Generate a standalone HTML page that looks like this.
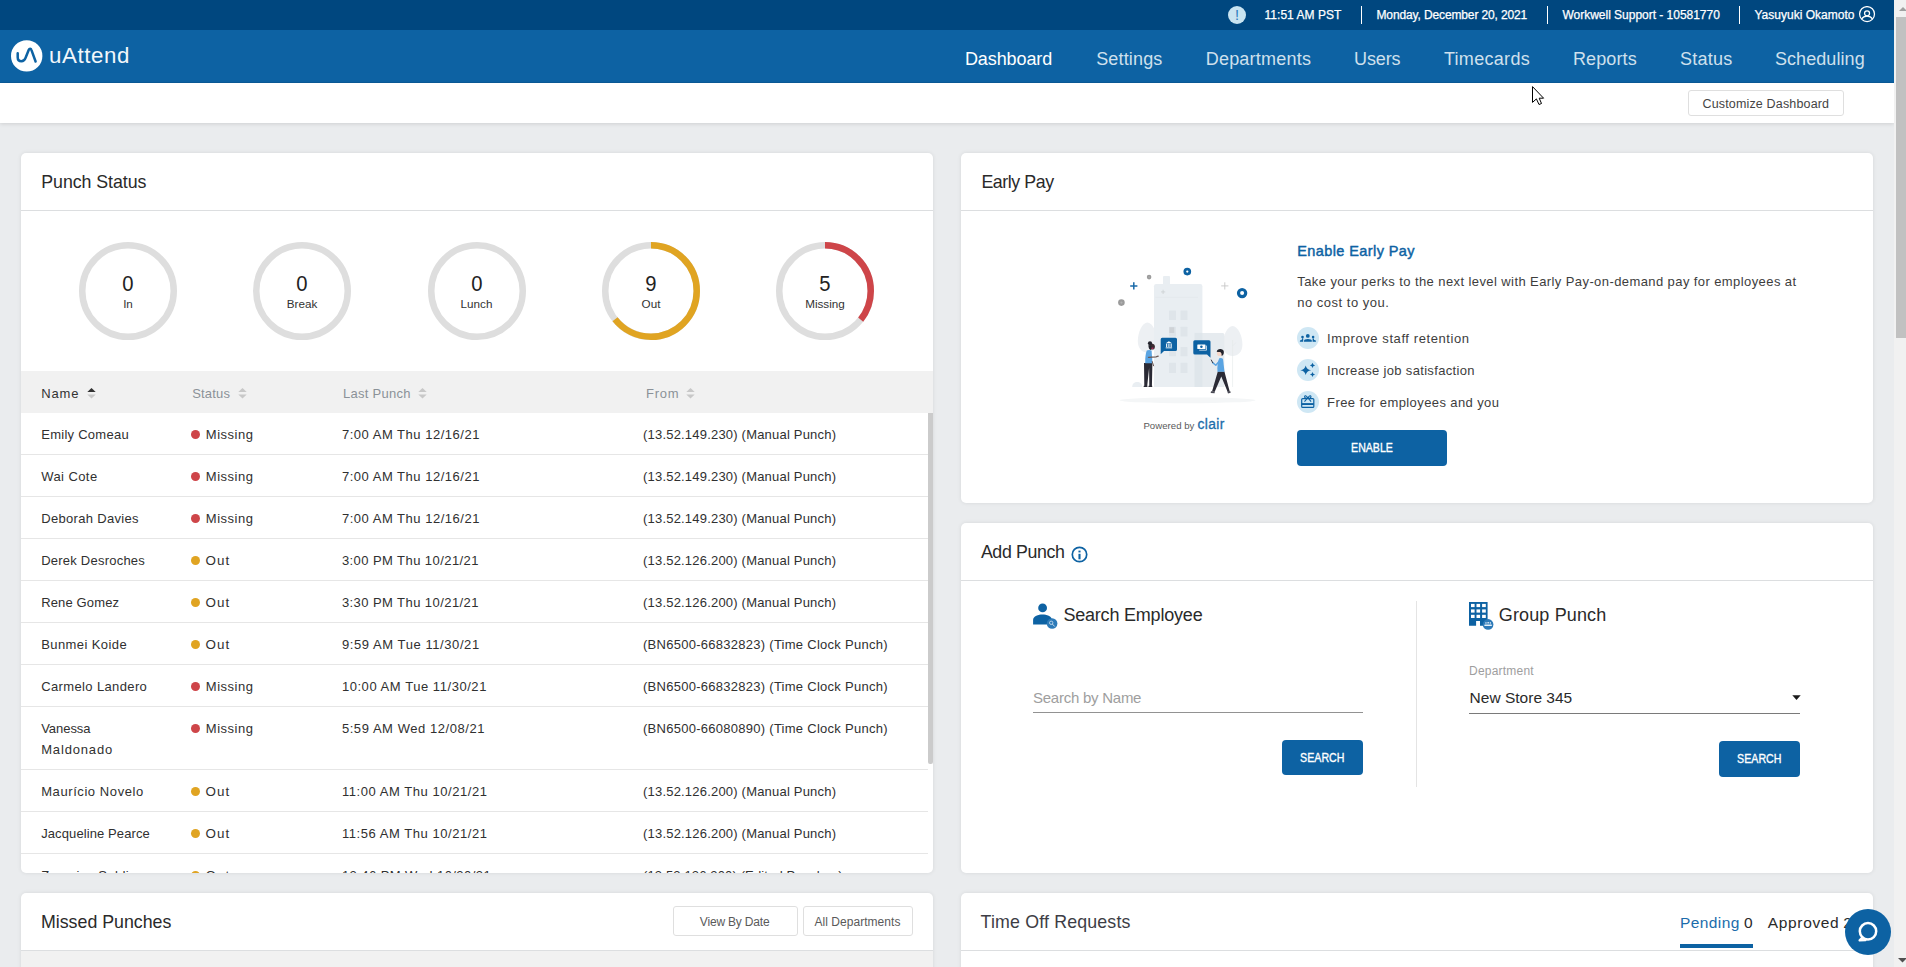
<!DOCTYPE html>
<html lang="en"><head><meta charset="utf-8"><title>uAttend Dashboard</title>
<style>
*{box-sizing:border-box;margin:0;padding:0}
html,body{width:1906px;height:967px;overflow:hidden}
body{font-family:"Liberation Sans",sans-serif;background:#eaecee;color:#333;position:relative}
.abs{position:absolute}
.card{position:absolute;background:#fff;border-radius:5px;box-shadow:0 0 4px rgba(0,0,0,.09);overflow:hidden}
.hline{position:absolute;left:0;right:0;height:1px;background:#dcdee0}
.btn{position:absolute;border:1px solid #dfdfdf;border-radius:3px;background:#fff}
.bbtn{position:absolute;background:#0d62a3;border-radius:4px}
.row{position:absolute;left:0;width:907px;height:1px;background:#e6e6e6}
.dot{position:absolute;width:9px;height:9px;border-radius:50%}
</style></head><body>

<div class="abs" style="left:0;top:0;width:1894px;height:30px;background:#00477f"></div>
<div class="abs" style="left:0;top:30px;width:1894px;height:53px;background:#0d62a3;border-bottom:1px solid #0b5b99"></div>
<div class="abs" style="left:0;top:83px;width:1894px;height:40px;background:#fff;box-shadow:0 1px 4px rgba(0,0,0,.12)"></div>
<div class="abs" style="left:1228px;top:6px;width:18px;height:18px;border-radius:50%;background:#c9e4f1"></div>
<span class="abs" style="left:1228px;top:6px;width:18px;height:18px;line-height:18px;text-align:center;font-size:14.5px;color:#2b7bbd">!</span>
<span style="position:absolute;left:1264.5px;top:9px;font-size:12px;line-height:1;color:#fff;white-space:pre;-webkit-text-stroke:0.25px #fff;letter-spacing:0.04px;">11:51 AM PST</span>
<span style="position:absolute;left:1376.5px;top:9px;font-size:12px;line-height:1;color:#fff;white-space:pre;-webkit-text-stroke:0.25px #fff;letter-spacing:-0.13px;">Monday, December 20, 2021</span>
<span style="position:absolute;left:1562.5px;top:9px;font-size:12px;line-height:1;color:#fff;white-space:pre;-webkit-text-stroke:0.25px #fff;letter-spacing:-0.02px;">Workwell Support - 10581770</span>
<span style="position:absolute;left:1754.5px;top:9px;font-size:12px;line-height:1;color:#fff;white-space:pre;-webkit-text-stroke:0.25px #fff;letter-spacing:0.01px;">Yasuyuki Okamoto</span>
<div class="abs" style="left:1361px;top:6px;width:1px;height:18px;background:#fff"></div>
<div class="abs" style="left:1547px;top:6px;width:1px;height:18px;background:#fff"></div>
<div class="abs" style="left:1739px;top:6px;width:1px;height:18px;background:#fff"></div>
<svg class="abs" style="left:1858px;top:6px" width="18" height="18" viewBox="0 0 18 18"><circle cx="9.05" cy="8.05" r="7.45" fill="none" stroke="#fff" stroke-width="1.25"/><circle cx="9.05" cy="7.3" r="2.5" fill="none" stroke="#fff" stroke-width="1.25"/><path d="M3.7 13 C5 10.700 7 10.100 9.05 10.100 C11.100 10.100 13.100 10.700 14.400 13" fill="none" stroke="#fff" stroke-width="1.25"/></svg>
<svg class="abs" style="left:10px;top:40px" width="34" height="34" viewBox="0 0 34 34"><circle cx="16.7" cy="15.9" r="15.7" fill="#fff"/><path d="M7.7 13.2 V17.2 C7.7 20 9.200 21.200 11.400 21.200 C13.700 21.200 14.900 19.800 15.800 17.300 L18.800 9.800 C19.400 8.300 20.900 8.300 21.400 9.800 L25.600 21.500" fill="none" stroke="#0d62a3" stroke-width="2.5" stroke-linecap="round" stroke-linejoin="round"/></svg>
<span style="position:absolute;left:49.1px;top:45px;font-size:22.3px;line-height:1;color:#f2f7fb;white-space:pre;letter-spacing:0.57px;">uAttend</span>
<span style="position:absolute;left:964.9px;top:50px;font-size:18px;line-height:1;color:#fff;white-space:pre;letter-spacing:-0.09px;">Dashboard</span>
<span style="position:absolute;left:1096.2px;top:50px;font-size:18px;line-height:1;color:#cfe0ed;white-space:pre;letter-spacing:0.16px;">Settings</span>
<span style="position:absolute;left:1205.7px;top:50px;font-size:18px;line-height:1;color:#cfe0ed;white-space:pre;letter-spacing:0.22px;">Departments</span>
<span style="position:absolute;left:1354.1px;top:50px;font-size:18px;line-height:1;color:#cfe0ed;white-space:pre;letter-spacing:-0.12px;">Users</span>
<span style="position:absolute;left:1443.9px;top:50px;font-size:18px;line-height:1;color:#cfe0ed;white-space:pre;letter-spacing:0.31px;">Timecards</span>
<span style="position:absolute;left:1572.9px;top:50px;font-size:18px;line-height:1;color:#cfe0ed;white-space:pre;letter-spacing:0.13px;">Reports</span>
<span style="position:absolute;left:1679.9px;top:50px;font-size:18px;line-height:1;color:#cfe0ed;white-space:pre;letter-spacing:0.26px;">Status</span>
<span style="position:absolute;left:1774.9px;top:50px;font-size:18px;line-height:1;color:#cfe0ed;white-space:pre;letter-spacing:0.08px;">Scheduling</span>
<div class="btn" style="left:1688px;top:90px;width:156px;height:26px"></div>
<span style="position:absolute;left:1702.5px;top:98px;font-size:12.5px;line-height:1;color:#444;white-space:pre;letter-spacing:0.16px;">Customize Dashboard</span>
<svg class="abs" style="left:1531px;top:85px" width="14" height="21" viewBox="0 0 14 21"><path d="M1.5 1.6 V17.4 L5.4 13.9 L8 19.5 L10.5 18.5 L8.2 13.2 H12.6 Z" fill="#fff" stroke="#000" stroke-width="1"/></svg>
<div class="card" style="left:21px;top:153px;width:912px;height:720px">
<span style="position:absolute;left:20.3px;top:21px;font-size:17.8px;line-height:1;color:#2a2a2a;white-space:pre;letter-spacing:-0.06px;">Punch Status</span>
<div class="hline" style="top:57px"></div>
<svg class="abs" style="left:57px;top:88px" width="100" height="100" viewBox="0 0 100 100"><circle cx="50" cy="50" r="45.75" fill="none" stroke="#dedede" stroke-width="6.5"/></svg>
<div class="abs" style="left:57px;top:119px;width:100px;text-align:center;font-size:21.5px;line-height:24px;color:#222;transform:scaleX(.94)">0</div>
<div class="abs" style="left:57px;top:143px;width:100px;text-align:center;font-size:11.7px;line-height:16px;color:#333;letter-spacing:0">In</div>
<svg class="abs" style="left:231px;top:88px" width="100" height="100" viewBox="0 0 100 100"><circle cx="50" cy="50" r="45.75" fill="none" stroke="#dedede" stroke-width="6.5"/></svg>
<div class="abs" style="left:231px;top:119px;width:100px;text-align:center;font-size:21.5px;line-height:24px;color:#222;transform:scaleX(.94)">0</div>
<div class="abs" style="left:231px;top:143px;width:100px;text-align:center;font-size:11.7px;line-height:16px;color:#333;letter-spacing:0">Break</div>
<svg class="abs" style="left:405.5px;top:88px" width="100" height="100" viewBox="0 0 100 100"><circle cx="50" cy="50" r="45.75" fill="none" stroke="#dedede" stroke-width="6.5"/></svg>
<div class="abs" style="left:405.5px;top:119px;width:100px;text-align:center;font-size:21.5px;line-height:24px;color:#222;transform:scaleX(.94)">0</div>
<div class="abs" style="left:405.5px;top:143px;width:100px;text-align:center;font-size:11.7px;line-height:16px;color:#333;letter-spacing:0">Lunch</div>
<svg class="abs" style="left:580px;top:88px" width="100" height="100" viewBox="0 0 100 100"><circle cx="50" cy="50" r="45.75" fill="none" stroke="#dedede" stroke-width="6.5"/><circle cx="50" cy="50" r="45.75" fill="none" stroke="#e0a422" stroke-width="6.5" stroke-dasharray="184.79 287.46" transform="rotate(-90 50 50)"/></svg>
<div class="abs" style="left:580px;top:119px;width:100px;text-align:center;font-size:21.5px;line-height:24px;color:#222;transform:scaleX(.94)">9</div>
<div class="abs" style="left:580px;top:143px;width:100px;text-align:center;font-size:11.7px;line-height:16px;color:#333;letter-spacing:0">Out</div>
<svg class="abs" style="left:754px;top:88px" width="100" height="100" viewBox="0 0 100 100"><circle cx="50" cy="50" r="45.75" fill="none" stroke="#dedede" stroke-width="6.5"/><circle cx="50" cy="50" r="45.75" fill="none" stroke="#ce4549" stroke-width="6.5" stroke-dasharray="102.66 287.46" transform="rotate(-90 50 50)"/></svg>
<div class="abs" style="left:754px;top:119px;width:100px;text-align:center;font-size:21.5px;line-height:24px;color:#222;transform:scaleX(.94)">5</div>
<div class="abs" style="left:754px;top:143px;width:100px;text-align:center;font-size:11.7px;line-height:16px;color:#333;letter-spacing:0">Missing</div>
<div class="abs" style="left:0;top:218px;width:912px;height:42px;background:#f1f1f1"></div>
<span style="position:absolute;left:20.2px;top:234px;font-size:13px;line-height:1;color:#333;white-space:pre;letter-spacing:0.88px;">Name</span>
<svg class="abs" style="left:65.5px;top:234px" width="9" height="13" viewBox="0 0 9 13"><path d="M0.3 5 L4.5 1 L8.7 5Z" fill="#333"/><path d="M0.3 7.4 L4.5 11.4 L8.7 7.4Z" fill="#c8c8c8"/></svg>
<span style="position:absolute;left:171.2px;top:234px;font-size:13px;line-height:1;color:#8b9198;white-space:pre;letter-spacing:0.18px;">Status</span>
<svg class="abs" style="left:217px;top:234px" width="9" height="13" viewBox="0 0 9 13"><path d="M0.3 5 L4.5 1 L8.7 5Z" fill="#c8c8c8"/><path d="M0.3 7.4 L4.5 11.4 L8.7 7.4Z" fill="#c8c8c8"/></svg>
<span style="position:absolute;left:322.0px;top:234px;font-size:13px;line-height:1;color:#8b9198;white-space:pre;letter-spacing:0.28px;">Last Punch</span>
<svg class="abs" style="left:397px;top:234px" width="9" height="13" viewBox="0 0 9 13"><path d="M0.3 5 L4.5 1 L8.7 5Z" fill="#c8c8c8"/><path d="M0.3 7.4 L4.5 11.4 L8.7 7.4Z" fill="#c8c8c8"/></svg>
<span style="position:absolute;left:625.0px;top:234px;font-size:13px;line-height:1;color:#8b9198;white-space:pre;letter-spacing:0.73px;">From</span>
<svg class="abs" style="left:665px;top:234px" width="9" height="13" viewBox="0 0 9 13"><path d="M0.3 5 L4.5 1 L8.7 5Z" fill="#c8c8c8"/><path d="M0.3 7.4 L4.5 11.4 L8.7 7.4Z" fill="#c8c8c8"/></svg>
<span style="position:absolute;left:20.2px;top:275px;font-size:13px;line-height:1;color:#303030;white-space:pre;letter-spacing:0.27px;">Emily Comeau</span>
<div class="dot" style="left:170px;top:277px;background:#ce4549"></div>
<span style="position:absolute;left:184.8px;top:275px;font-size:13px;line-height:1;color:#303030;white-space:pre;letter-spacing:0.51px;">Missing</span>
<span style="position:absolute;left:320.9px;top:275px;font-size:13px;line-height:1;color:#303030;white-space:pre;letter-spacing:0.52px;">7:00 AM Thu 12/16/21</span>
<span style="position:absolute;left:622.0px;top:275px;font-size:13px;line-height:1;color:#303030;white-space:pre;letter-spacing:0.20px;">(13.52.149.230) (Manual Punch)</span>
<div class="row" style="top:301px"></div>
<span style="position:absolute;left:20.2px;top:317px;font-size:13px;line-height:1;color:#303030;white-space:pre;letter-spacing:0.42px;">Wai Cote</span>
<div class="dot" style="left:170px;top:319px;background:#ce4549"></div>
<span style="position:absolute;left:184.8px;top:317px;font-size:13px;line-height:1;color:#303030;white-space:pre;letter-spacing:0.51px;">Missing</span>
<span style="position:absolute;left:320.9px;top:317px;font-size:13px;line-height:1;color:#303030;white-space:pre;letter-spacing:0.52px;">7:00 AM Thu 12/16/21</span>
<span style="position:absolute;left:622.0px;top:317px;font-size:13px;line-height:1;color:#303030;white-space:pre;letter-spacing:0.20px;">(13.52.149.230) (Manual Punch)</span>
<div class="row" style="top:343px"></div>
<span style="position:absolute;left:20.2px;top:359px;font-size:13px;line-height:1;color:#303030;white-space:pre;letter-spacing:0.32px;">Deborah Davies</span>
<div class="dot" style="left:170px;top:361px;background:#ce4549"></div>
<span style="position:absolute;left:184.8px;top:359px;font-size:13px;line-height:1;color:#303030;white-space:pre;letter-spacing:0.51px;">Missing</span>
<span style="position:absolute;left:320.9px;top:359px;font-size:13px;line-height:1;color:#303030;white-space:pre;letter-spacing:0.52px;">7:00 AM Thu 12/16/21</span>
<span style="position:absolute;left:622.0px;top:359px;font-size:13px;line-height:1;color:#303030;white-space:pre;letter-spacing:0.20px;">(13.52.149.230) (Manual Punch)</span>
<div class="row" style="top:385px"></div>
<span style="position:absolute;left:20.2px;top:401px;font-size:13px;line-height:1;color:#303030;white-space:pre;letter-spacing:0.23px;">Derek Desroches</span>
<div class="dot" style="left:170px;top:403px;background:#e0a422"></div>
<span style="position:absolute;left:184.4px;top:401px;font-size:13.4px;line-height:1;color:#303030;white-space:pre;letter-spacing:1.09px;">Out</span>
<span style="position:absolute;left:320.9px;top:401px;font-size:13px;line-height:1;color:#303030;white-space:pre;letter-spacing:0.43px;">3:00 PM Thu 10/21/21</span>
<span style="position:absolute;left:622.0px;top:401px;font-size:13px;line-height:1;color:#303030;white-space:pre;letter-spacing:0.20px;">(13.52.126.200) (Manual Punch)</span>
<div class="row" style="top:427px"></div>
<span style="position:absolute;left:20.2px;top:443px;font-size:13px;line-height:1;color:#303030;white-space:pre;letter-spacing:0.14px;">Rene Gomez</span>
<div class="dot" style="left:170px;top:445px;background:#e0a422"></div>
<span style="position:absolute;left:184.4px;top:443px;font-size:13.4px;line-height:1;color:#303030;white-space:pre;letter-spacing:1.09px;">Out</span>
<span style="position:absolute;left:320.9px;top:443px;font-size:13px;line-height:1;color:#303030;white-space:pre;letter-spacing:0.43px;">3:30 PM Thu 10/21/21</span>
<span style="position:absolute;left:622.0px;top:443px;font-size:13px;line-height:1;color:#303030;white-space:pre;letter-spacing:0.20px;">(13.52.126.200) (Manual Punch)</span>
<div class="row" style="top:469px"></div>
<span style="position:absolute;left:20.2px;top:485px;font-size:13px;line-height:1;color:#303030;white-space:pre;letter-spacing:0.41px;">Bunmei Koide</span>
<div class="dot" style="left:170px;top:487px;background:#e0a422"></div>
<span style="position:absolute;left:184.4px;top:485px;font-size:13.4px;line-height:1;color:#303030;white-space:pre;letter-spacing:1.09px;">Out</span>
<span style="position:absolute;left:320.9px;top:485px;font-size:13px;line-height:1;color:#303030;white-space:pre;letter-spacing:0.58px;">9:59 AM Tue 11/30/21</span>
<span style="position:absolute;left:622.0px;top:485px;font-size:13px;line-height:1;color:#303030;white-space:pre;letter-spacing:0.27px;">(BN6500-66832823) (Time Clock Punch)</span>
<div class="row" style="top:511px"></div>
<span style="position:absolute;left:20.2px;top:527px;font-size:13px;line-height:1;color:#303030;white-space:pre;letter-spacing:0.37px;">Carmelo Landero</span>
<div class="dot" style="left:170px;top:529px;background:#ce4549"></div>
<span style="position:absolute;left:184.8px;top:527px;font-size:13px;line-height:1;color:#303030;white-space:pre;letter-spacing:0.51px;">Missing</span>
<span style="position:absolute;left:320.9px;top:527px;font-size:13px;line-height:1;color:#303030;white-space:pre;letter-spacing:0.55px;">10:00 AM Tue 11/30/21</span>
<span style="position:absolute;left:622.0px;top:527px;font-size:13px;line-height:1;color:#303030;white-space:pre;letter-spacing:0.27px;">(BN6500-66832823) (Time Clock Punch)</span>
<div class="row" style="top:553px"></div>
<span style="position:absolute;left:20.2px;top:569px;font-size:13px;line-height:1;color:#303030;white-space:pre;letter-spacing:-0.05px;">Vanessa</span>
<span style="position:absolute;left:20.2px;top:590px;font-size:13px;line-height:1;color:#303030;white-space:pre;letter-spacing:0.84px;">Maldonado</span>
<div class="dot" style="left:170px;top:571px;background:#ce4549"></div>
<span style="position:absolute;left:184.8px;top:569px;font-size:13px;line-height:1;color:#303030;white-space:pre;letter-spacing:0.51px;">Missing</span>
<span style="position:absolute;left:320.9px;top:569px;font-size:13px;line-height:1;color:#303030;white-space:pre;letter-spacing:0.56px;">5:59 AM Wed 12/08/21</span>
<span style="position:absolute;left:622.0px;top:569px;font-size:13px;line-height:1;color:#303030;white-space:pre;letter-spacing:0.27px;">(BN6500-66080890) (Time Clock Punch)</span>
<div class="row" style="top:616px"></div>
<span style="position:absolute;left:20.2px;top:632px;font-size:13px;line-height:1;color:#303030;white-space:pre;letter-spacing:0.58px;">Maurício Novelo</span>
<div class="dot" style="left:170px;top:634px;background:#e0a422"></div>
<span style="position:absolute;left:184.4px;top:632px;font-size:13.4px;line-height:1;color:#303030;white-space:pre;letter-spacing:1.09px;">Out</span>
<span style="position:absolute;left:320.9px;top:632px;font-size:13px;line-height:1;color:#303030;white-space:pre;letter-spacing:0.56px;">11:00 AM Thu 10/21/21</span>
<span style="position:absolute;left:622.0px;top:632px;font-size:13px;line-height:1;color:#303030;white-space:pre;letter-spacing:0.20px;">(13.52.126.200) (Manual Punch)</span>
<div class="row" style="top:658px"></div>
<span style="position:absolute;left:20.2px;top:674px;font-size:13px;line-height:1;color:#303030;white-space:pre;letter-spacing:0.10px;">Jacqueline Pearce</span>
<div class="dot" style="left:170px;top:676px;background:#e0a422"></div>
<span style="position:absolute;left:184.4px;top:674px;font-size:13.4px;line-height:1;color:#303030;white-space:pre;letter-spacing:1.09px;">Out</span>
<span style="position:absolute;left:320.9px;top:674px;font-size:13px;line-height:1;color:#303030;white-space:pre;letter-spacing:0.56px;">11:56 AM Thu 10/21/21</span>
<span style="position:absolute;left:622.0px;top:674px;font-size:13px;line-height:1;color:#303030;white-space:pre;letter-spacing:0.20px;">(13.52.126.200) (Manual Punch)</span>
<div class="row" style="top:700px"></div>
<span style="position:absolute;left:20.2px;top:716px;font-size:13px;line-height:1;color:#303030;white-space:pre;letter-spacing:0.40px;">Zacarias Saldivar</span>
<div class="dot" style="left:170px;top:718px;background:#e0a422"></div>
<span style="position:absolute;left:184.4px;top:716px;font-size:13.4px;line-height:1;color:#303030;white-space:pre;letter-spacing:1.09px;">Out</span>
<span style="position:absolute;left:320.9px;top:716px;font-size:13px;line-height:1;color:#303030;white-space:pre;letter-spacing:0.44px;">12:46 PM Wed 10/20/21</span>
<span style="position:absolute;left:622.0px;top:716px;font-size:13px;line-height:1;color:#303030;white-space:pre;letter-spacing:0.14px;">(13.52.126.200) (Edited Punches)</span>
<div class="row" style="top:742px"></div>
<div class="abs" style="left:907px;top:260px;width:5px;height:351px;background:#cbcbcb;border-radius:0 0 2px 2px"></div>
</div>
<div class="card" style="left:21px;top:893px;width:912px;height:120px">
<span style="position:absolute;left:20.0px;top:21px;font-size:17.8px;line-height:1;color:#2a2a2a;white-space:pre;letter-spacing:-0.01px;">Missed Punches</span>
<div class="btn" style="left:652px;top:13px;width:125px;height:30px"></div>
<span style="position:absolute;left:678.8px;top:23px;font-size:12px;line-height:1;color:#5a5a5a;white-space:pre;letter-spacing:-0.18px;">View By Date</span>
<div class="btn" style="left:782px;top:13px;width:110px;height:30px"></div>
<span style="position:absolute;left:793.5px;top:23px;font-size:12px;line-height:1;color:#5a5a5a;white-space:pre;letter-spacing:0.04px;">All Departments</span>
<div class="hline" style="top:57px"></div>
<div class="abs" style="left:0;top:58px;width:912px;height:60px;background:#f1f1f1"></div>
</div>
<div class="card" style="left:961px;top:153px;width:912px;height:350px">
<span style="position:absolute;left:20.4px;top:21px;font-size:17.8px;line-height:1;color:#2a2a2a;white-space:pre;letter-spacing:-0.42px;">Early Pay</span>
<div class="hline" style="top:57px"></div>
<svg class="abs" style="left:149px;top:107px" width="150" height="180" viewBox="1110 260 150 180" font-family="Liberation Sans, sans-serif">
<ellipse cx="1187.5" cy="400.3" rx="68" ry="2.9" fill="#f4f6f7"/>
<path d="M1147.4 322.4 C1152.400 322.4 1157 332 1157 341 C1157 348.500 1152.700 352.6 1147.4 352.6 C1142.100 352.6 1137.800 348.500 1137.800 341 C1137.800 332 1142.400 322.4 1147.4 322.4Z" fill="#edf0f3"/>
<path d="M1232.6 326 C1237.700 326 1242.400 335.500 1242.400 344.500 C1242.400 352 1238 356 1232.6 356 C1227.200 356 1222.800 352 1222.800 344.500 C1222.800 335.500 1227.500 326 1232.6 326Z" fill="#edf0f3"/>
<path d="M1232.6 340 V387 M1232.6 346 L1236 342.5" stroke="#e3e7ea" stroke-width="0.6" fill="none"/>
<rect x="1163" y="276" width="7" height="10" rx="1" fill="#e9eef2"/>
<path d="M1154 387 V286.2 Q1154 284 1156.2 284 H1200.2 Q1202.4 284 1202.4 286.2 V387Z" fill="#e9eef2"/>
<path d="M1155.5 297.4 H1198" stroke="#e1e6ea" stroke-width="0.6"/>
<path d="M1194.6 387 V334.4 Q1194.6 332.9 1196.1 332.9 H1222.8 Q1224.3 332.9 1224.3 334.4 V387Z" fill="#e6ebef"/>
<rect x="1194.6" y="332.9" width="7.8" height="54.1" fill="#dfe6eb"/>
<g fill="#dfe5ea">
<rect x="1169" y="310.5" width="7" height="9.6" rx="0.6"/><rect x="1180.5" y="310.5" width="7" height="9.6" rx="0.6"/>
<rect x="1169" y="326.7" width="7" height="9.8" rx="0.6"/><rect x="1180.5" y="326.7" width="7" height="9.8" rx="0.6"/>
<rect x="1169" y="346.9" width="7" height="9.4" rx="0.6"/><rect x="1180.5" y="346.9" width="7" height="9.4" rx="0.6"/>
<rect x="1169" y="362.8" width="7" height="10.3" rx="0.6"/><rect x="1180.5" y="362.8" width="7" height="10.3" rx="0.6"/>
</g>
<rect x="1169.3" y="327.2" width="5" height="5.8" fill="#cfd3d7"/>
<path d="M1132.2 387 C1132.2 383.6 1134.4 381.9 1137.2 381.9 C1140 381.9 1142.2 383.6 1142.2 387Z" fill="#e9eef2"/>
<!-- decorations -->
<circle cx="1187.3" cy="271.6" r="2.5" fill="none" stroke="#0d62a3" stroke-width="2.7"/>
<circle cx="1242.1" cy="293.1" r="3.6" fill="none" stroke="#0d62a3" stroke-width="3.2"/>
<circle cx="1149.1" cy="277.1" r="2.3" fill="#9b9b9b"/><circle cx="1149.1" cy="277.1" r="0.8" fill="#adadad"/>
<circle cx="1121.4" cy="302.6" r="3.3" fill="#9b9b9b"/><circle cx="1121.4" cy="302.6" r="1.1" fill="#b3b3b3"/>
<path d="M1130.2 285.9 H1137.4 M1133.8 282.3 V289.5" stroke="#1a6aa9" stroke-width="1.5"/>
<path d="M1221.2 285.9 H1228.4 M1224.8 282.3 V289.5" stroke="#c6c6c6" stroke-width="0.9"/>
<path d="M1161 291.9 H1165.2 M1163.1 289.8 V294" stroke="#c9cdd0" stroke-width="0.7"/>
<!-- bubbles -->
<path d="M1162.2 337.8 H1175.5 Q1177 337.8 1177 339.3 V349.5 Q1177 351 1175.500 351 H1164 L1160.700 354.3 V339.3 Q1160.700 337.8 1162.2 337.8Z" fill="#0d62a3"/>
<g fill="#fff"><path d="M1165.700 343.2 L1168.900 341.200 L1172.100 343.2Z"/><rect x="1166.100" y="343.700" width="1.100" height="3.300"/><rect x="1168.350" y="343.700" width="1.100" height="3.300"/><rect x="1170.600" y="343.700" width="1.100" height="3.300"/><rect x="1165.700" y="347.400" width="6.400" height="0.900"/></g>
<path d="M1194.800 340.200 H1209 Q1210.500 340.200 1210.500 341.700 V357.700 L1207 354.400 H1194.800 Q1193.300 354.400 1193.300 352.900 V341.700 Q1193.300 340.200 1194.800 340.200Z" fill="#0d62a3"/>
<rect x="1197.300" y="344.400" width="8.200" height="4.700" rx="0.500" fill="#fff"/><circle cx="1201.400" cy="346.750" r="1.250" fill="#0d62a3"/>
<path d="M1206.500 345.600 V350.200 H1199.200" fill="none" stroke="#fff" stroke-width="0.700"/>
<!-- left person -->
<path d="M1144 363 H1152.400 L1151.900 386 H1149.300 L1149.100 368 L1147.200 386 H1144.300Z" fill="#2a2a35"/>
<path d="M1143.800 385.700 H1147.400 V387 H1143.600Z M1148.600 385.700 H1152.200 V387 H1148.400Z" fill="#2a2a35"/>
<path d="M1146.800 350.500 Q1149.600 349.400 1151.600 350.800 L1152.500 363.300 H1145.200 Q1145 355 1146.800 350.500Z" fill="#5aa4e2"/>
<path d="M1148.500 357.300 L1156 356.900 L1158.200 356.200" fill="none" stroke="#6b5a57" stroke-width="1.300" stroke-linecap="round"/>
<path d="M1152.200 361.500 L1153.600 365.800" stroke="#6b5a57" stroke-width="1" stroke-linecap="round"/>
<circle cx="1152" cy="346.700" r="2.900" fill="#3a2c31"/>
<circle cx="1150" cy="343.300" r="2.100" fill="#24242d"/><path d="M1148.400 345 Q1148.400 349.800 1151 349.900 L1151.500 346 Z" fill="#24242d"/>
<rect x="1151.600" y="347.700" width="1.800" height="1" fill="#d6246e"/>
<!-- right person -->
<path d="M1217.800 371.400 H1224.400 L1229.700 391.500 L1227.700 392 L1221.300 376.500 L1214.700 391.800 L1212 391.400Z" fill="#2a2a35"/>
<path d="M1211 391.300 L1214.800 391.600 L1214.600 393.200 L1210.700 393Z M1227.400 391.700 L1230.200 391 L1230.700 392.700 L1228 393.600Z" fill="#4a4a55"/>
<path d="M1219.200 358.300 Q1221.500 357.200 1223 359 L1224.500 371.800 H1217.500 Q1216.800 364 1219.200 358.300Z" fill="#5aa4e2"/>
<path d="M1219.500 361 L1215.800 365.300 L1212.600 362.600" fill="none" stroke="#5aa4e2" stroke-width="1.500" stroke-linecap="round" stroke-linejoin="round"/>
<path d="M1211.300 360 L1212.700 362.700" stroke="#3b3b45" stroke-width="1" stroke-linecap="round"/>
<circle cx="1219.700" cy="353.400" r="2.700" fill="#f6d7c8"/>
<path d="M1216.700 351.700 Q1217.300 348.700 1220.800 349 Q1224.300 349.400 1223.800 353.200 Q1223.400 355.500 1221.700 356 Q1222 353 1220.300 351.900 Q1218.400 352.400 1216.700 351.700Z" fill="#24242d"/>
<!-- powered by -->
<text x="1143.400" y="429.300" font-size="9.600" fill="#5a5a5a" textLength="51" lengthAdjust="spacing">Powered by</text>
<text x="1197.600" y="429.300" font-size="13.800" fill="#1b6cab" stroke="#1b6cab" stroke-width="0.300" textLength="26.700" lengthAdjust="spacing">clair</text>
</svg>

<span style="position:absolute;left:336.2px;top:91px;font-size:14.5px;line-height:1;color:#0d62a3;white-space:pre;-webkit-text-stroke:0.45px #0d62a3;letter-spacing:0.41px;">Enable Early Pay</span>
<span style="position:absolute;left:336.3px;top:122px;font-size:13px;line-height:1;color:#3d3d3d;white-space:pre;letter-spacing:0.41px;">Take your perks to the next level with Early Pay-on-demand pay for employees at</span>
<span style="position:absolute;left:336.3px;top:143px;font-size:13px;line-height:1;color:#3d3d3d;white-space:pre;letter-spacing:0.50px;">no cost to you.</span>
<div class="abs" style="left:336px;top:174px;width:22px;height:22px;border-radius:50%;background:#cfe7f4"></div>
<svg class="abs" style="left:336px;top:174px" width="22" height="22" viewBox="1297 327 22 22"><g fill="#0d62a3"><circle cx="1307.800" cy="335.900" r="1.900"/><path d="M1304 341.800 V340.800 Q1304 339.100 1307.900 339.100 Q1311.800 339.100 1311.800 340.800 V341.800Z"/><circle cx="1302.500" cy="337" r="1.300"/><circle cx="1313.100" cy="337" r="1.300"/><path d="M1299.900 341.800 V340.900 Q1299.900 340.100 1301.600 340 L1302.200 338.300 H1303.200 V341.800Z"/><path d="M1315.900 341.800 V340.900 Q1315.900 340.100 1314.200 340 L1313.600 338.300 H1312.600 V341.800Z"/></g></svg>

<span style="position:absolute;left:366.1px;top:179px;font-size:13px;line-height:1;color:#3d3d3d;white-space:pre;letter-spacing:0.58px;">Improve staff retention</span>
<div class="abs" style="left:336px;top:206px;width:22px;height:22px;border-radius:50%;background:#cfe7f4"></div>
<svg class="abs" style="left:336px;top:206px" width="22" height="22" viewBox="1297 359 22 22"><g fill="#0d62a3"><path d="M1305.700 365.400 Q1306.500 369.400 1311.100 370.200 Q1306.500 371 1305.700 375 Q1304.900 371 1300.300 370.200 Q1304.900 369.400 1305.700 365.400Z"/><path d="M1312.500 362.800 Q1312.900 365 1315.100 365.400 Q1312.900 365.800 1312.500 368 Q1312.100 365.800 1309.900 365.400 Q1312.100 365 1312.500 362.800Z"/><path d="M1312.500 371.900 Q1312.900 374.100 1315.100 374.500 Q1312.900 374.900 1312.500 377.100 Q1312.100 374.900 1309.900 374.500 Q1312.100 374.100 1312.500 371.900Z"/></g></svg>

<span style="position:absolute;left:366.1px;top:211px;font-size:13px;line-height:1;color:#3d3d3d;white-space:pre;letter-spacing:0.33px;">Increase job satisfaction</span>
<div class="abs" style="left:336px;top:238px;width:22px;height:22px;border-radius:50%;background:#cfe7f4"></div>
<svg class="abs" style="left:336px;top:238px" width="22" height="22" viewBox="1297 391 22 22"><g fill="none" stroke="#0d62a3" stroke-width="1.200"><rect x="1301.700" y="398.600" width="12.100" height="8.800" rx="1"/><path d="M1304.500 401.600 L1307.800 397.600 L1311.100 401.600" stroke-width="1.100"/><path d="M1307.800 397.800 Q1305 394.400 1304.600 396.800 Q1304.600 398.300 1307.800 398.200 Q1311 398.300 1311 396.800 Q1310.600 394.400 1307.800 397.800Z" stroke-width="1.100"/></g><rect x="1301.700" y="403.100" width="12.100" height="1.900" fill="#0d62a3"/></svg>

<span style="position:absolute;left:366.1px;top:243px;font-size:13px;line-height:1;color:#3d3d3d;white-space:pre;letter-spacing:0.40px;">Free for employees and you</span>
<div class="bbtn" style="left:336px;top:277px;width:150px;height:36px"></div>
<span style="position:absolute;left:390.4px;top:289px;font-size:12.5px;line-height:1;color:#fff;white-space:pre;-webkit-text-stroke:0.35px #fff;transform:scaleX(0.847);transform-origin:0.5px 50%;">ENABLE</span>
</div>
<div class="card" style="left:961px;top:523px;width:912px;height:350px">
<span style="position:absolute;left:19.9px;top:21px;font-size:17.8px;line-height:1;color:#2a2a2a;white-space:pre;letter-spacing:-0.38px;">Add Punch</span>
<svg class="abs" style="left:110.25px;top:22.65px" width="17" height="17" viewBox="0 0 17 17"><circle cx="8.5" cy="8.5" r="7.2" fill="none" stroke="#0d62a3" stroke-width="1.7"/><rect x="7.45" y="7.8" width="2.1" height="5.5" fill="#0d62a3"/><rect x="7.45" y="4.6" width="2.1" height="1.8" fill="#0d62a3"/></svg>
<div class="hline" style="top:57px"></div>
<div class="abs" style="left:455px;top:78px;width:1px;height:186px;background:#e4e4e4"></div>
<svg class="abs" style="left:69px;top:77px" width="32" height="32" viewBox="1030 600 32 32"><circle cx="1042.600" cy="607.900" r="4.400" fill="#0d62a3"/><path d="M1033.100 624.600 V619.800 C1033.100 616.400 1038.500 614.600 1042.500 614.600 C1046.500 614.600 1051.900 616.400 1051.900 619.800 V624.600Z" fill="#0d62a3"/><circle cx="1052.100" cy="623.500" r="5.300" fill="#2d7ab8"/><circle cx="1051.200" cy="622.800" r="1.700" fill="none" stroke="#cfe2f1" stroke-width="0.800"/><path d="M1052.500 624.200 L1054.400 626.200" stroke="#cfe2f1" stroke-width="0.900" stroke-linecap="round"/></svg>

<span style="position:absolute;left:102.4px;top:83px;font-size:18px;line-height:1;color:#2a2a2a;white-space:pre;letter-spacing:-0.20px;">Search Employee</span>
<span style="position:absolute;left:72.0px;top:167px;font-size:15px;line-height:1;color:#9e9e9e;white-space:pre;letter-spacing:-0.25px;">Search by Name</span>
<div class="abs" style="left:72px;top:189px;width:330px;height:1px;background:#929292"></div>
<div class="bbtn" style="left:321px;top:217px;width:81px;height:35px"></div>
<span style="position:absolute;left:339.4px;top:228px;font-size:13px;line-height:1;color:#fff;white-space:pre;-webkit-text-stroke:0.35px #fff;transform:scaleX(0.819);transform-origin:0.5px 50%;">SEARCH</span>
<svg class="abs" style="left:504px;top:75px" width="34" height="34" viewBox="1465 598 34 34"><path d="M1469 602 H1487.600 V625.800 H1480 V621 H1476.100 V625.800 H1469Z" fill="#0d62a3"/><g fill="#fff"><rect x="1471" y="603.900" width="3.600" height="3.200"/><rect x="1476.500" y="603.900" width="3.600" height="3.200"/><rect x="1482.100" y="603.900" width="3.700" height="3.200"/><rect x="1471" y="609.400" width="3.600" height="3.200"/><rect x="1476.500" y="609.400" width="3.600" height="3.200"/><rect x="1482.100" y="609.400" width="3.700" height="3.200"/><rect x="1471" y="614.800" width="3.600" height="3.200"/><rect x="1476.500" y="614.800" width="3.600" height="3.200"/><rect x="1482.100" y="614.800" width="3.700" height="3.200"/></g><circle cx="1488.100" cy="624.400" r="5.300" fill="#2d7ab8"/><g fill="#e4eff8"><rect x="1485.300" y="622.300" width="1.300" height="1.300"/><rect x="1487.450" y="622" width="1.400" height="1.500"/><rect x="1489.700" y="622.300" width="1.300" height="1.300"/><rect x="1484.300" y="624.500" width="7.600" height="1.400" rx="0.400"/></g></svg>

<span style="position:absolute;left:537.8px;top:83px;font-size:18px;line-height:1;color:#2a2a2a;white-space:pre;letter-spacing:0.14px;">Group Punch</span>
<span style="position:absolute;left:508.1px;top:142px;font-size:12px;line-height:1;color:#9e9e9e;white-space:pre;letter-spacing:0.20px;">Department</span>
<span style="position:absolute;left:508.6px;top:167px;font-size:15.5px;line-height:1;color:#2a2a2a;white-space:pre;letter-spacing:0.01px;">New Store 345</span>
<svg class="abs" style="left:830.5px;top:171.5px" width="9" height="6" viewBox="0 0 9 6"><path d="M0.3 0.2 H8.7 L4.5 5Z" fill="#1a1a1a"/></svg>
<div class="abs" style="left:508px;top:190px;width:331px;height:1px;background:#7a7a7a"></div>
<div class="bbtn" style="left:758px;top:218px;width:81px;height:36px"></div>
<span style="position:absolute;left:776.3px;top:229px;font-size:13px;line-height:1;color:#fff;white-space:pre;-webkit-text-stroke:0.35px #fff;transform:scaleX(0.819);transform-origin:0.5px 50%;">SEARCH</span>
</div>
<div class="card" style="left:961px;top:893px;width:912px;height:120px">
<span style="position:absolute;left:19.6px;top:21px;font-size:17.8px;line-height:1;color:#3d3d45;white-space:pre;letter-spacing:0.16px;">Time Off Requests</span>
<span style="position:absolute;left:719.1px;top:22px;font-size:15.5px;line-height:1;color:#1b6cab;white-space:pre;letter-spacing:0.39px;">Pending</span>
<span style="position:absolute;left:782.9px;top:22px;font-size:15.5px;line-height:1;color:#2a2a2a;white-space:pre;">0</span>
<span style="position:absolute;left:806.8px;top:22px;font-size:15.5px;line-height:1;color:#2a2a2a;white-space:pre;letter-spacing:0.65px;">Approved</span>
<span style="position:absolute;left:882.3px;top:22px;font-size:15.5px;line-height:1;color:#2a2a2a;white-space:pre;">2</span>
<div class="abs" style="left:719px;top:51px;width:73px;height:4px;background:#0d62a3"></div>
<div class="hline" style="top:57px"></div>
</div>
<div class="abs" style="left:1845px;top:909px;width:46px;height:46px;border-radius:50%;background:#0d62a3"></div>
<svg class="abs" style="left:1845px;top:909px" width="46" height="46" viewBox="0 0 46 46"><circle cx="23" cy="22.3" r="8.2" fill="none" stroke="#fff" stroke-width="2.5"/><path d="M17.600 28.400 L14.600 31.400 L20.500 31.100" fill="none" stroke="#fff" stroke-width="2.300" stroke-linejoin="round" stroke-linecap="round"/></svg>
<div class="abs" style="left:1894px;top:0;width:17px;height:967px;background:#f1f1f1"></div>
<div class="abs" style="left:1896px;top:17px;width:13px;height:321px;background:#c1c1c1"></div>
<svg class="abs" style="left:1898.5px;top:6.5px" width="8" height="4" viewBox="0 0 8 4"><path d="M0 4 L4 0 L8 4Z" fill="#a0a0a0"/></svg>
<svg class="abs" style="left:1898px;top:958px" width="9" height="5" viewBox="0 0 9 5"><path d="M0 0 L4.5 4.5 L9 0Z" fill="#505050"/></svg>
</body></html>
